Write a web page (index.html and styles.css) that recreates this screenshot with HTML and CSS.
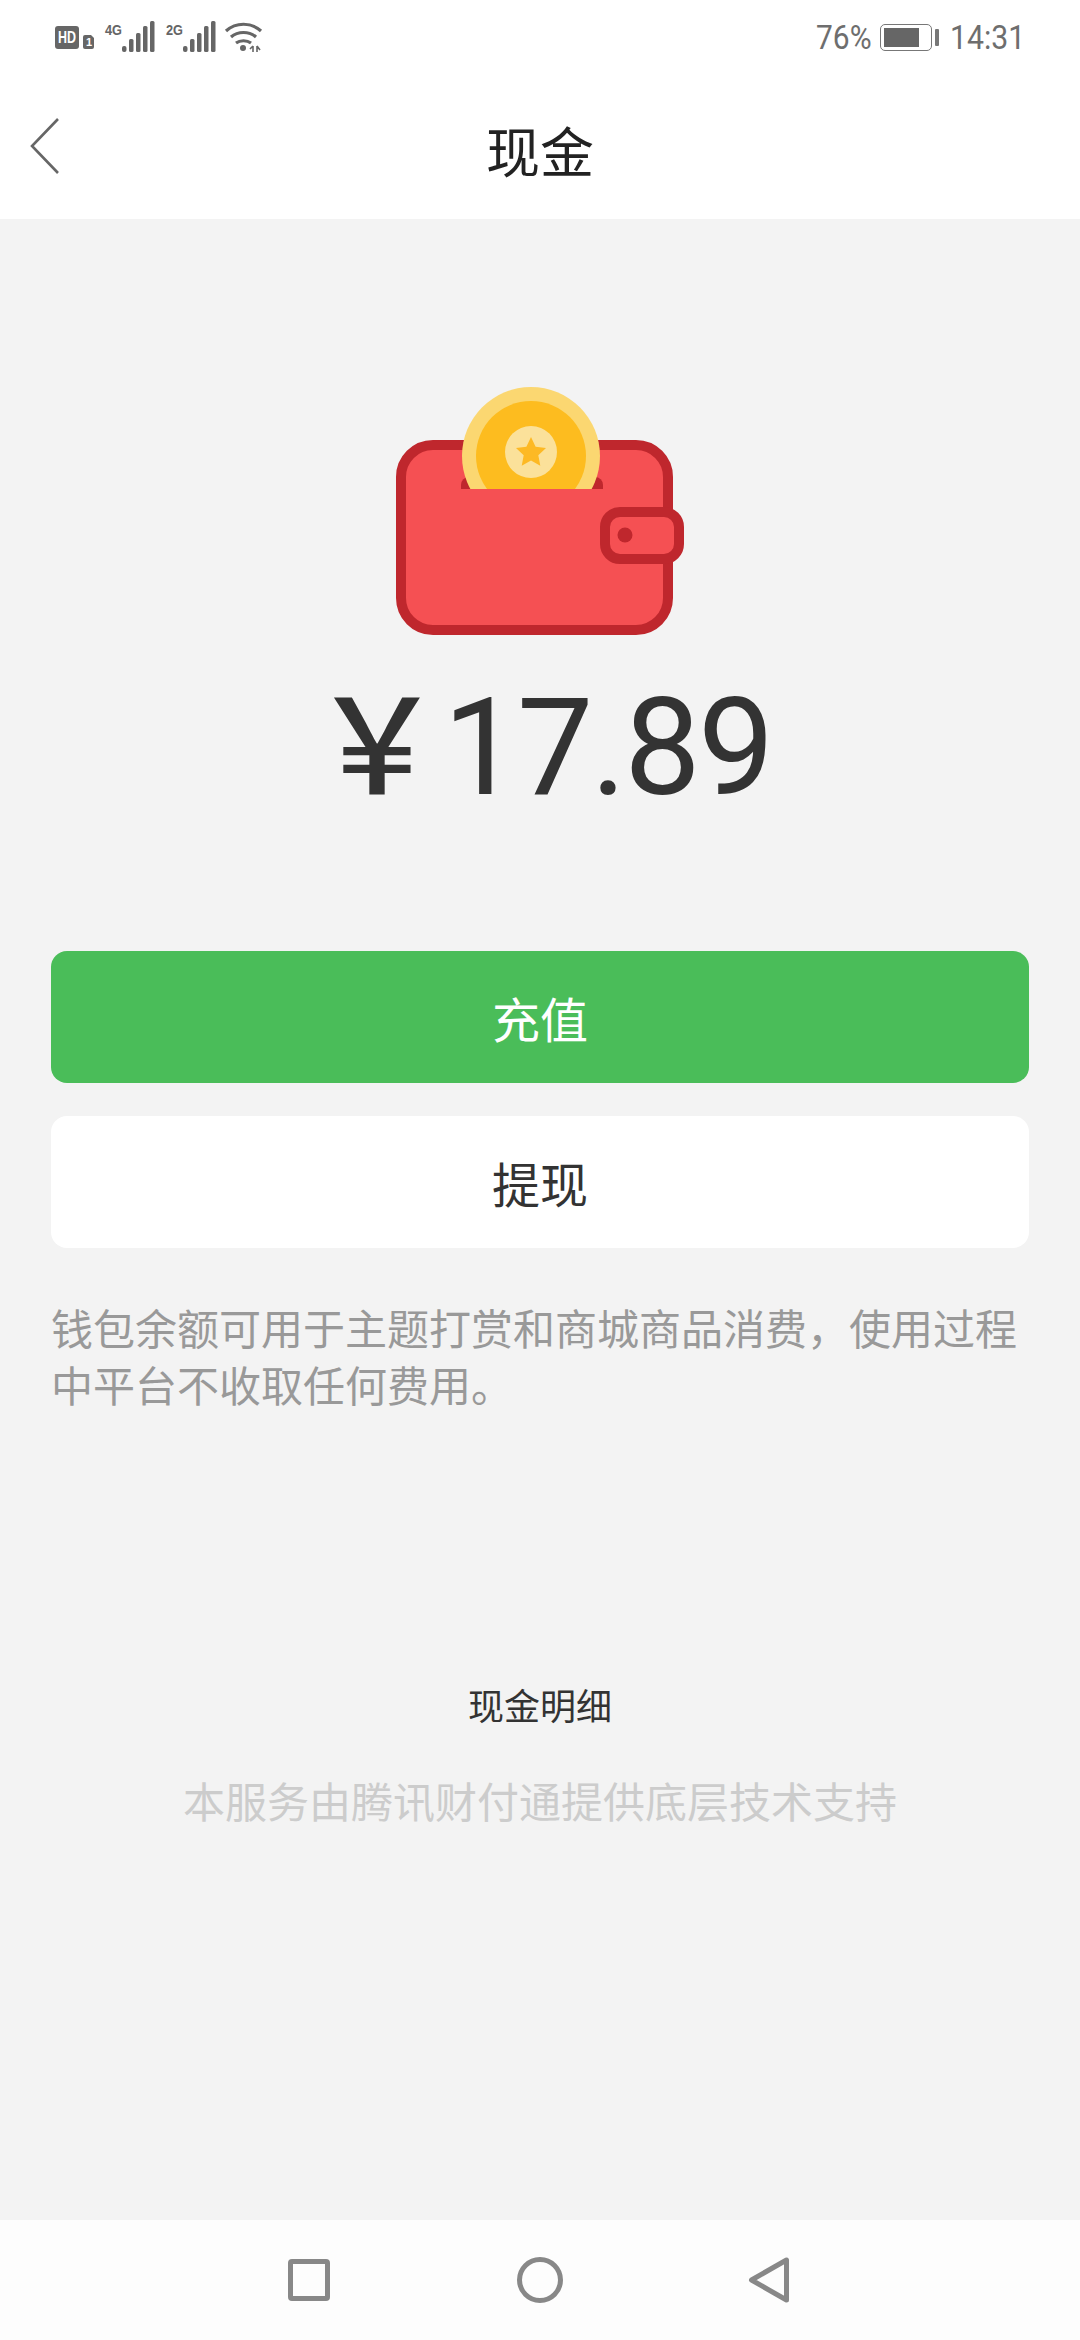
FILE: index.html
```html
<!DOCTYPE html>
<html lang="zh-CN">
<head>
    <meta charset="UTF-8">
    <meta name="viewport" content="width=device-width, initial-scale=1.0">
    <title>现金</title>
    <link rel="stylesheet" href="styles.css">
</head>
<body>
    <div class="page">

        <!-- status bar -->
        <div class="status-bar">
            <svg class="status-icons" width="220" height="79" viewBox="54 0 220 79">
                <rect x="55" y="26" width="24" height="23" rx="3" fill="#666"/>
                <text x="58" y="43" class="hd-text" textLength="18" lengthAdjust="spacingAndGlyphs">HD</text>
                <path d="M83 37a2 2 0 0 1 2-2h6l3 3v9a2 2 0 0 1-2 2h-7a2 2 0 0 1-2-2z" fill="#666"/>
                <text x="86" y="46" class="sim-text">1</text>
                <text x="105" y="35" class="net-text" textLength="17" lengthAdjust="spacingAndGlyphs">4G</text>
                <g fill="#666">
                    <rect x="122" y="46" width="4.500" height="6" rx="2"/>
                    <rect x="129" y="39" width="4.500" height="13" rx="1.500"/>
                    <rect x="136" y="33" width="4.500" height="19" rx="1.500"/>
                    <rect x="143" y="26" width="4.500" height="26" rx="1.500"/>
                    <rect x="150" y="21" width="4.500" height="31" rx="1.500"/>
                </g>
                <text x="166" y="35" class="net-text" textLength="17" lengthAdjust="spacingAndGlyphs">2G</text>
                <g fill="#666">
                    <rect x="183" y="46" width="4.500" height="6" rx="2"/>
                    <rect x="190" y="39" width="4.500" height="13" rx="1.500"/>
                    <rect x="197" y="33" width="4.500" height="19" rx="1.500"/>
                    <rect x="204" y="26" width="4.500" height="26" rx="1.500"/>
                    <rect x="211" y="21" width="4.500" height="31" rx="1.500"/>
                </g>
                <g fill="none" stroke="#666" stroke-width="3.200">
                    <path d="M226 31c10-9 25-9 35 0"/>
                    <path d="M231 37c7-6 18-6 25 0"/>
                    <path d="M236 43c4-3 11-3 15 0"/>
                </g>
                <circle cx="243" cy="48" r="3" fill="#666"/>
                <path d="M253 46v6M250 49l3-3M257 46v6M257 46l3 4" fill="none" stroke="#666" stroke-width="1.600"/>
            </svg>
            <div class="status-right">
                <span class="narrow narrow-pct">76%</span>
                <div class="battery"><div class="battery-level"></div></div>
                <div class="battery-nub"></div>
                <span class="narrow narrow-time">14:31</span>
            </div>
        </div>

        <!-- title bar -->
        <div class="title-bar">
            <svg class="back-icon" width="30" height="58" viewBox="0 0 30 58">
                <polyline points="28,2 2,29 28,56" fill="none" stroke="#666" stroke-width="2.600"/>
            </svg>
            <h1 class="title">现金</h1>
        </div>

        <div class="content">
            <svg class="wallet" width="340" height="280" viewBox="0 0 340 280">
                <rect x="31" y="75" width="267" height="185" rx="32" fill="#f55053" stroke="#bf272d" stroke-width="10"/>
                <path d="M91 119v-4a8 8 0 0 1 8-8h126a8 8 0 0 1 8 8v4z" fill="#bf272d"/>
                <clipPath id="coin-clip"><rect x="0" y="0" width="340" height="119"/></clipPath>
                <g clip-path="url(#coin-clip)">
                    <circle cx="161" cy="86" r="69" fill="#fbd771"/>
                    <circle cx="161" cy="86" r="55" fill="#fdbc1f"/>
                </g>
                <circle cx="161" cy="82" r="26" fill="#fbe19a"/>
                <path d="M161 67l4.600 9.700 10.400 1.300-7.700 7.200 2 10.600-9.300-5.200-9.300 5.200 2-10.600-7.700-7.200 10.400-1.300z" fill="#fdb924"/>
                <rect x="235" y="142" width="74" height="47" rx="15" fill="#f55053" stroke="#bf272d" stroke-width="10"/>
                <circle cx="255" cy="165" r="7.500" fill="#bf272d"/>
            </svg>

            <div class="amount"><span class="currency">￥</span>17.89</div>

            <div class="actions">
                <button class="btn btn-primary">充值</button>
                <button class="btn btn-plain">提现</button>
            </div>

            <p class="desc">钱包余额可用于主题打赏和商城商品消费，使用过程中平台不收取任何费用。</p>

            <div class="detail-link">现金明细</div>
            <div class="provider">本服务由腾讯财付通提供底层技术支持</div>
        </div>

        <!-- system nav -->
        <div class="nav-bar">
            <svg width="700" height="60" viewBox="190 2250 700 60">
                <g fill="none" stroke="#888" stroke-width="5" stroke-linejoin="round">
                    <rect x="290.500" y="2261.500" width="37" height="37" rx="1.500"/>
                    <circle cx="540" cy="2280" r="20.500"/>
                    <path d="M786.500 2260v40l-35-20z"/>
                </g>
            </svg>
        </div>
    </div>
</body>
</html>
```

FILE: styles.css
```css
* { box-sizing: border-box; }
body { margin: 0; font-family: Roboto, "Noto Sans CJK SC", sans-serif; background: #f3f3f3; }
.page { width: 1080px; height: 2340px; display: flex; flex-direction: column; }

.status-bar { height: 79px; background: #fff; display: flex; justify-content: space-between; padding: 0 55px 0 54px; }
.hd-text { font: bold 16px "Liberation Sans", sans-serif; fill: #fff; }
.sim-text { font: bold 11px "Liberation Sans", sans-serif; fill: #fff; }
.net-text { font: bold 15px "Liberation Sans", sans-serif; fill: #666; }
.status-right { display: flex; align-items: flex-start; padding-top: 17px; color: #6e6e6e; font-size: 34px; line-height: 40px; }
.narrow { display: inline-block; transform-origin: left center; }
.narrow-pct { width: 64px; transform: scaleX(.88); }
.narrow-time { width: 75px; transform: scaleX(.89); }
.battery { width: 52px; height: 27px; margin-top: 7px; border: 1.5px solid #777; border-radius: 5px; padding: 3px; }
.battery-level { width: 35px; height: 100%; background: #666; }
.battery-nub { width: 4px; height: 17px; margin: 12px 11px 0 3px; background: #777; border-radius: 1px; }

.title-bar { height: 140px; background: #fff; display: flex; align-items: center; justify-content: center; position: relative; }
.back-icon { position: absolute; left: 30px; top: 38px; }
.title { margin: 0; font-size: 54px; font-weight: 400; color: #222; }

.content { flex: 1; display: flex; flex-direction: column; align-items: center; padding-top: 151px; }
.wallet { display: block; }
.amount { margin-top: 20px; height: 134px; display: flex; align-items: baseline; padding-left: 3px; font-size: 136px; line-height: 134px; letter-spacing: -2.500px; color: #333; white-space: nowrap; }
.currency { font-family: "Noto Sans CJK SC", sans-serif; font-size: 132px; font-weight: 500; letter-spacing: 0; }

.actions { margin-top: 147px; display: flex; flex-direction: column; gap: 33px; }
.btn { width: 978px; height: 132px; border: 0; border-radius: 16px; font-family: inherit; font-size: 48px; padding: 0; }
.btn-primary { background: #4abd59; color: #fff; }
.btn-plain { background: #fff; color: #333; }

.desc { width: 978px; margin: 54px 0 0; font-size: 42px; line-height: 57px; color: #999; }
.detail-link { margin-top: 267px; font-size: 36px; line-height: 50px; color: #333; }
.provider { margin-top: 43px; font-size: 42px; line-height: 56px; color: #ccc; }

.nav-bar { height: 120px; background: #fdfdfd; display: flex; justify-content: center; align-items: flex-start; padding-top: 30px; }
```
